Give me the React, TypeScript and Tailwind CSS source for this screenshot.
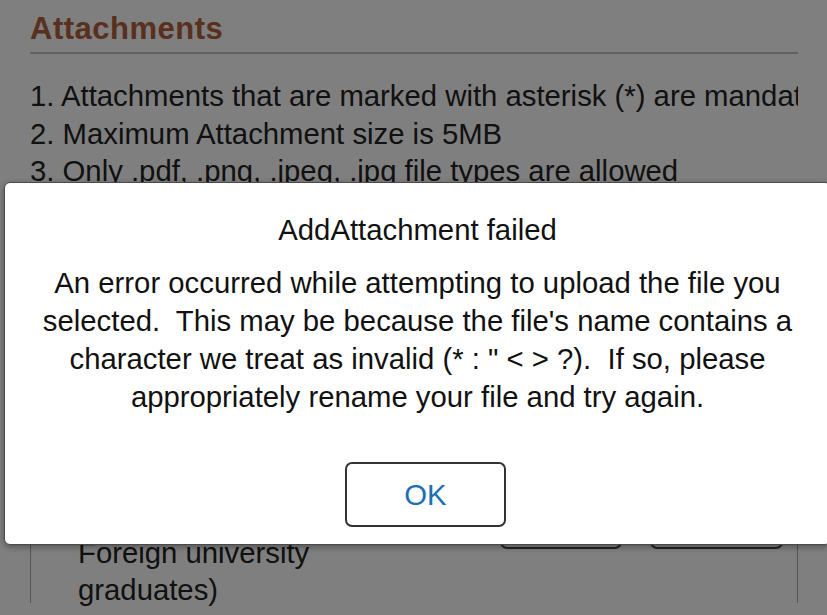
const requirements = [
  "1. Attachments that are marked with asterisk (*) are mandatory",
  "2. Maximum Attachment size is 5MB",
  "3. Only .pdf, .png, .jpeg, .jpg file types are allowed",
];

function AttachmentRow() {
  return (
    <div className="mt-[11px] h-[402px] border-x border-t border-[#aaaaaa] pt-[258px]">
      <div className="flex items-start justify-between pl-[47px] pr-[14px]">
        <p className="w-[248px] text-[29.3px] leading-[37px] text-[#222]">
          Degree Certificate (Applicable to Foreign university graduates)
        </p>
        <div className="mt-[45px] flex gap-[28px]">
          <button className="h-[44px] w-[122px] rounded-[7px] border-2 border-[#444] text-[20px] text-[#2a7fd0]">
            Upload
          </button>
          <button className="h-[44px] w-[133px] rounded-[7px] border-2 border-[#444] text-[20px] text-[#2a7fd0]">
            View
          </button>
        </div>
      </div>
    </div>
  );
}

function ErrorDialog() {
  return (
    <div
      role="dialog"
      className="absolute left-[4px] top-[182px] w-[827px] rounded-[6px] border border-[#4a4a4a] bg-white pb-[17px] pt-[29px] text-center text-[#111] shadow-[0_2px_6px_rgba(0,0,0,0.35)]"
    >
      <h3 className="text-[29.3px] leading-[36px]">AddAttachment failed</h3>
      <p className="mx-auto mt-4 w-[790px] text-[29.3px] leading-[38px]">
        An error occurred while attempting to upload the file you selected.&nbsp; This may be
        because the file's name contains a character we treat as invalid (* : " &lt; &gt; ?).&nbsp;
        If so, please appropriately rename your file and try again.
      </p>
      <div className="mt-[46px] flex justify-center">
        <button className="ml-4 h-[65px] w-[161px] rounded-[7px] border-2 border-[#333] text-[29.3px] text-[#1a6fb5]">
          OK
        </button>
      </div>
    </div>
  );
}

export default function App() {
  return (
    <div className="relative h-[615px] w-[827px] overflow-hidden bg-white font-['Liberation_Sans',Arial,sans-serif]">
      <section className="box-content w-[768px] pl-[30px] pt-[11px]">
        <h2 className="text-[31px] font-bold leading-[36px] tracking-[0.5px] text-[#b25e3c]">
          Attachments
        </h2>
        <div className="mt-[5px] h-[2px] bg-[#c0c0c0]" />
        <ol className="mt-[23px] overflow-hidden whitespace-nowrap text-[29.3px] leading-[37.5px] text-[#222]">
          {requirements.map((item) => (
            <li key={item}>{item}</li>
          ))}
        </ol>
        <AttachmentRow />
      </section>

      <div className="absolute inset-0 bg-black/50" />
      <ErrorDialog />
    </div>
  );
}
